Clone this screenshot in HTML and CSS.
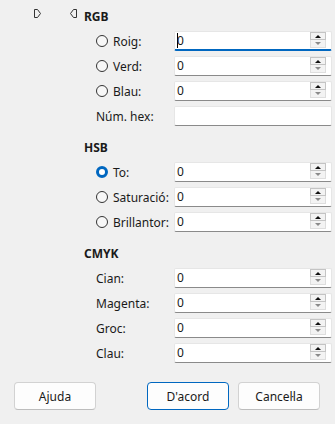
FILE: index.html
```html
<!DOCTYPE html>
<html lang="ca">
<head>
    <meta charset="UTF-8">
    <title>Color</title>
    <link rel="stylesheet" href="styles.css">
</head>
<body>
    <div class="dialog">
        <div class="main">
            <div class="side">
                <svg class="marker" width="7" height="9" viewBox="0 0 7 9"><path d="M0.5 0.5 H3.5 L6.5 4.5 L3.5 8.5 H0.5 Z" fill="none" stroke="#333" stroke-width="1"/></svg>
                <svg class="marker" width="7" height="9" viewBox="0 0 7 9"><path d="M6.5 0.5 H3.5 L0.5 4.5 L3.5 8.5 H6.5 Z" fill="none" stroke="#333" stroke-width="1"/></svg>
            </div>

            <div class="form">
                <div class="group">
                    <h2>RGB</h2>
                    <div class="rows">
                        <div class="row">
                            <label class="lbl"><span class="radio"></span>Roig:</label>
                            <div class="field focus"><span class="caret"></span><span class="val">0</span>
                                <div class="spin"><span class="up"></span><span class="down"></span></div>
                            </div>
                        </div>
                        <div class="row">
                            <label class="lbl"><span class="radio"></span>Verd:</label>
                            <div class="field"><span class="val">0</span>
                                <div class="spin"><span class="up"></span><span class="down"></span></div>
                            </div>
                        </div>
                        <div class="row">
                            <label class="lbl"><span class="radio"></span>Blau:</label>
                            <div class="field"><span class="val">0</span>
                                <div class="spin"><span class="up"></span><span class="down"></span></div>
                            </div>
                        </div>
                        <div class="row">
                            <label class="lbl">Núm. hex:</label>
                            <div class="field"><span class="val"></span></div>
                        </div>
                    </div>
                </div>

                <div class="group">
                    <h2>HSB</h2>
                    <div class="rows">
                        <div class="row">
                            <label class="lbl"><span class="radio checked"></span>To:</label>
                            <div class="field"><span class="val">0</span>
                                <div class="spin"><span class="up"></span><span class="down"></span></div>
                            </div>
                        </div>
                        <div class="row">
                            <label class="lbl"><span class="radio"></span>Saturació:</label>
                            <div class="field"><span class="val">0</span>
                                <div class="spin"><span class="up"></span><span class="down"></span></div>
                            </div>
                        </div>
                        <div class="row">
                            <label class="lbl"><span class="radio"></span>Brillantor:</label>
                            <div class="field"><span class="val">0</span>
                                <div class="spin"><span class="up"></span><span class="down"></span></div>
                            </div>
                        </div>
                    </div>
                </div>

                <div class="group">
                    <h2>CMYK</h2>
                    <div class="rows">
                        <div class="row">
                            <label class="lbl">Cian:</label>
                            <div class="field"><span class="val">0</span>
                                <div class="spin"><span class="up"></span><span class="down"></span></div>
                            </div>
                        </div>
                        <div class="row">
                            <label class="lbl">Magenta:</label>
                            <div class="field"><span class="val">0</span>
                                <div class="spin"><span class="up"></span><span class="down"></span></div>
                            </div>
                        </div>
                        <div class="row">
                            <label class="lbl">Groc:</label>
                            <div class="field"><span class="val">0</span>
                                <div class="spin"><span class="up"></span><span class="down"></span></div>
                            </div>
                        </div>
                        <div class="row">
                            <label class="lbl">Clau:</label>
                            <div class="field"><span class="val">0</span>
                                <div class="spin"><span class="up"></span><span class="down"></span></div>
                            </div>
                        </div>
                    </div>
                </div>
            </div>
        </div>

        <div class="buttons">
            <button>Ajuda</button>
            <span class="spacer"></span>
            <button class="default">D'acord</button>
            <button>Cancel·la</button>
        </div>
    </div>
</body>
</html>
```

FILE: styles.css
```css
* {
    margin: 0;
    padding: 0;
    box-sizing: border-box;
}

body {
    font-family: 'Noto Sans', 'Open Sans', sans-serif;
    font-size: 12px;
    color: #1a1a1a;
    background: #f0f0f0;
}

.dialog {
    width: 335px;
    height: 424px;
    padding-top: 7px;
}

.main {
    display: flex;
}

.side {
    width: 84px;
    display: flex;
    gap: 29px;
    padding-left: 34px;
    padding-top: 2px;
}

.marker {
    display: block;
}

.form {
    width: 248px;
}

.group + .group {
    margin-top: 12px;
}

.group h2 {
    font-size: 12px;
    font-weight: bold;
    line-height: 20px;
    height: 20px;
    margin-bottom: 4px;
}

.rows {
    display: flex;
    flex-direction: column;
    gap: 5px;
    padding-left: 12px;
}

.row {
    display: flex;
    align-items: center;
    height: 20px;
}

.lbl {
    width: 78px;
    display: flex;
    align-items: center;
    gap: 5px;
    white-space: nowrap;
}

.radio {
    width: 12px;
    height: 12px;
    border: 1px solid #333;
    border-radius: 50%;
    background: #f7f7f7;
}

.radio.checked {
    border: 3.5px solid #0067c0;
    background: #fff;
}

.field {
    width: 158px;
    height: 20px;
    background: #fff;
    border: 1px solid #e6e6e6;
    border-bottom: 1px solid #8a8a8a;
    border-radius: 2px;
    display: flex;
    align-items: center;
    padding-left: 2px;
}

.field.focus {
    border-bottom: 2px solid #0067c0;
}

.caret {
    width: 1px;
    height: 15px;
    background: #000;
    margin-right: -1px;
}

.val {
    flex: 1;
    line-height: 18px;
}

.spin {
    display: flex;
    flex-direction: column;
    margin-right: 5px;
    align-self: flex-start;
    margin-top: 0;
}

.spin span {
    width: 16px;
    height: 8px;
    background: #f3f3f3;
    border: 1px solid #c4c4c4;
    display: flex;
    justify-content: center;
    align-items: center;
}

.spin .down {
    border-color: #dedede;
    border-top: none;
}

.spin .up::after {
    content: "";
    border-left: 3px solid transparent;
    border-right: 3px solid transparent;
    border-bottom: 3px solid #111;
}

.spin .down::after {
    content: "";
    border-left: 3px solid transparent;
    border-right: 3px solid transparent;
    border-top: 3px solid #8a8a8a;
}

.buttons {
    display: flex;
    gap: 9px;
    padding: 0 15px 0 14px;
    margin-top: 19px;
}

.spacer {
    flex: 1;
}

button {
    width: 82px;
    height: 28px;
    font-family: inherit;
    font-size: 12px;
    color: #1a1a1a;
    background: #fdfdfd;
    border: 1px solid #d2d2d2;
    border-bottom-color: #bdbdbd;
    border-radius: 4px;
}

button.default {
    border: 1px solid #0067c0;
}
```
